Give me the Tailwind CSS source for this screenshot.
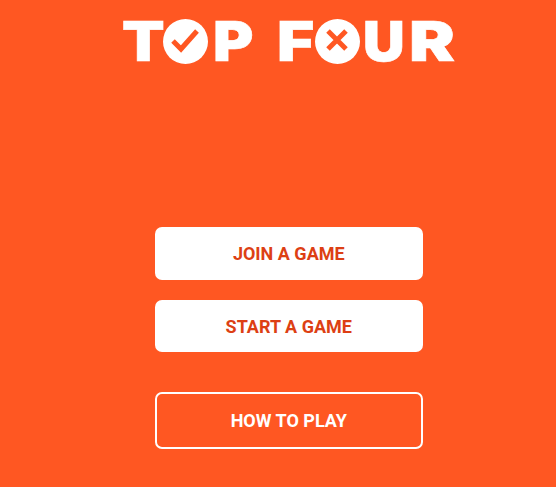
<!DOCTYPE html>
<html>
    <head>
        <meta charset="UTF-8">
        <script src="https://cdn.jsdelivr.net/npm/@tailwindcss/browser@4"></script>
        <title>Top Four</title>
    </head>

    <body>
        <div class="min-h-screen bg-[#ff5722] pt-[20px] font-['Roboto',sans-serif] overflow-hidden h-[487px]">
            <!-- logo -->
            <div class="flex items-center h-[42px] pl-[122px] text-white font-['Inter',sans-serif] font-black text-[55px] leading-[42px] [-webkit-text-stroke:0.6px_white]">
                <span class="w-[41px] origin-left scale-x-[1.13]">T</span>
                <svg class="w-[45px] h-[45px] shrink-0" viewBox="0 0 45 45">
                    <circle cx="22.5" cy="22.5" r="22.5" fill="#fff"/>
                    <path d="M10 22l8 8 16-18" fill="none" stroke="#ff5722" stroke-width="5"/>
                </svg>
                <span class="w-[57px] ml-[5px] origin-left scale-x-[1.12]">P</span>
                <span class="w-[38px] ml-[7px] origin-left scale-x-[1.16]">F</span>
                <svg class="w-[45px] h-[45px] shrink-0" viewBox="0 0 45 45">
                    <circle cx="22.5" cy="22.5" r="22.5" fill="#fff"/>
                    <path d="M13 12l18 18M31 12L13 30" fill="none" stroke="#ff5722" stroke-width="5"/>
                </svg>
                <span class="w-[46px] ml-[3px] origin-left scale-x-[1.05]">U</span>
                <span class="origin-left scale-x-[1.25]">R</span>
            </div>

            <!-- buttons -->
            <div class="ml-[154.5px] w-[268.5px] mt-[165px] flex flex-col text-[18px] font-bold">
                <button class="h-[53px] bg-white rounded-[7px] text-[#dd3f14]">JOIN A GAME</button>
                <button class="h-[52px] mt-[20px] bg-white rounded-[7px] text-[#dd3f14]">START A GAME</button>
                <button class="h-[57px] mt-[40px] border-2 border-white rounded-[7px] text-white">HOW TO PLAY</button>
            </div>
        </div>
    </body>
</html>
